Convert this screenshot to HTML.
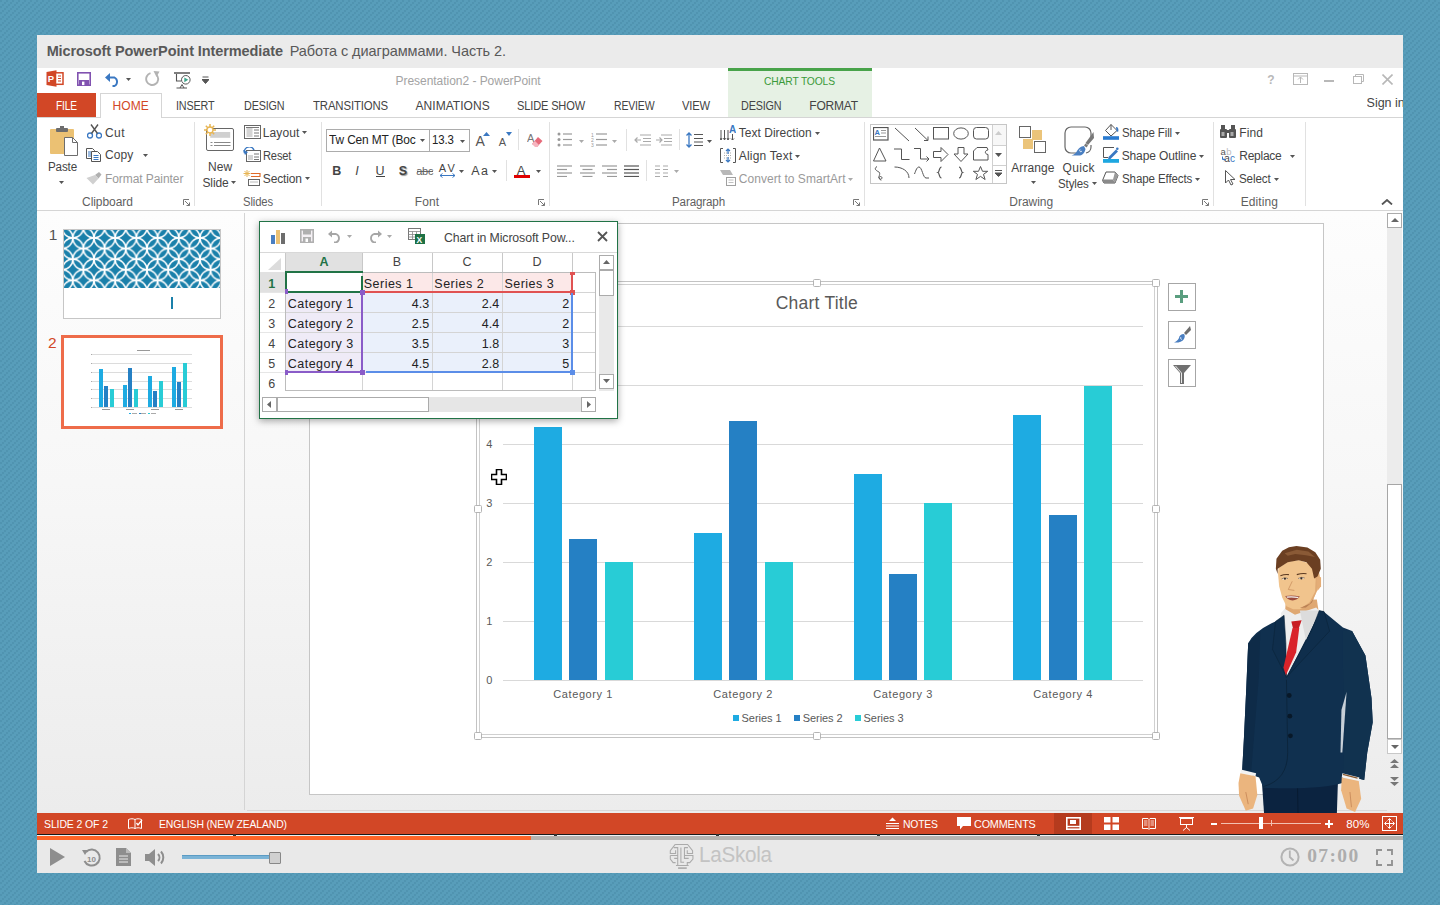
<!DOCTYPE html>
<html><head><meta charset="utf-8">
<style>
*{margin:0;padding:0;box-sizing:border-box}
html,body{width:1440px;height:905px;overflow:hidden}
body{background-color:#589dba;background-image:radial-gradient(circle at 1px 1px,#5094b1 0.7px,rgba(80,148,177,0) 1.6px),radial-gradient(circle at 1px 1px,#5094b1 0.7px,rgba(80,148,177,0) 1.6px),radial-gradient(circle at 1px 1px,#5094b1 0.7px,rgba(80,148,177,0) 1.6px);background-size:6px 6px;background-position:0 0,4px 2px,2px 4px;font-family:"Liberation Sans",sans-serif;position:relative;color:#444}
.a{position:absolute;display:block}
.t{position:absolute;white-space:pre;line-height:1}
</style></head><body>
<div class="a" style="left:37px;top:35px;width:1366px;height:838px;background:#fff;"></div>
<div class="a" style="left:37px;top:35px;width:1366px;height:33px;background:#ebebeb;"></div>
<div class="a" style="left:37px;top:211px;width:1366px;height:602px;background:linear-gradient(#fdfdfd 0%,#f7f7f7 45%,#ececec 100%);"></div>
<div class="a" style="left:37px;top:210px;width:1366px;height:1px;background:#d5d5d5;"></div>
<div class="t" style="left:46.63px;top:43.70px;font-size:14.5px;color:#595959;font-weight:700;letter-spacing:-0.089px;">Microsoft PowerPoint Intermediate</div>
<div class="t" style="left:289.63px;top:43.70px;font-size:14.5px;color:#595959;letter-spacing:-0.075px;">Работа с диаграммами. Часть 2.</div>
<svg class="a" style="left:46px;top:70px;" width="18" height="17" viewBox="0 0 18 17"><path d="M0.5 2 L10.5 0.3 V16.7 L0.5 15Z" fill="#d24726"/><rect x="9.5" y="2.8" width="7.5" height="11.5" fill="#fff" stroke="#d24726" stroke-width="1.5"/><path d="M12 6h3M12 8.5h3M12 11h3" stroke="#d24726" stroke-width="1.2"/><text x="1.8" y="12.3" font-family="Liberation Sans" font-weight="700" font-size="9.5" fill="#fff">P</text></svg>
<svg class="a" style="left:77px;top:72px;" width="14" height="14" viewBox="0 0 14 14"><rect x="0.8" y="0.8" width="12.4" height="12.4" fill="#fff" stroke="#8152b0" stroke-width="1.6"/><rect x="2" y="8" width="10" height="5.5" fill="#8152b0"/><rect x="5" y="9.6" width="2.4" height="3.5" fill="#fff"/></svg>
<svg class="a" style="left:105px;top:71px;" width="17" height="16" viewBox="0 0 17 16"><path d="M3 6.5 H9.5 A4.8 4.8 0 0 1 9.5 15 H7.5" fill="none" stroke="#3a78c2" stroke-width="1.9"/><path d="M0 6.5 L5 2 V11Z" fill="#3a78c2"/></svg>
<svg class="a" style="left:126px;top:78px;" width="5" height="3" viewBox="0 0 5 3"><path d="M0 0H5L2.5 3Z" fill="#555"/></svg>
<svg class="a" style="left:145px;top:71px;" width="15" height="15" viewBox="0 0 15 15"><path d="M11.5 3.8 A6 6 0 1 1 5.5 2.2" fill="none" stroke="#b3b3b3" stroke-width="1.9"/><path d="M8.5 0 L14.5 0.5 L11.5 6Z" fill="#b3b3b3"/></svg>
<svg class="a" style="left:174px;top:72px;" width="17" height="17" viewBox="0 0 17 17"><path d="M0 1H16" stroke="#555" stroke-width="1.5"/><path d="M2.5 2V9H7" fill="none" stroke="#555" stroke-width="1.1"/><circle cx="11.8" cy="7.8" r="4.3" fill="#fff" stroke="#555" stroke-width="1"/><path d="M10.3 5.5 L14.3 7.8 L10.3 10.2Z" fill="#3aa389"/><path d="M2.5 16H13M6 16L8 12.5L10 16" fill="none" stroke="#555" stroke-width="1"/></svg>
<svg class="a" style="left:202px;top:76px;" width="7" height="8" viewBox="0 0 7 8"><path d="M0.5 1H6.5M0 3.5H7L3.5 7.5Z" stroke="#555" stroke-width="1" fill="#555"/></svg>
<div class="t" style="left:395.53px;top:75.04px;font-size:12px;color:#a3a3a3;letter-spacing:-0.036px;">Presentation2 - PowerPoint</div>
<div class="t" style="left:1267.28px;top:74.04px;font-size:12px;color:#b8b8b8;font-weight:700;">?</div>
<svg class="a" style="left:1293px;top:73px;" width="15" height="12" viewBox="0 0 15 12"><rect x="0.5" y="0.5" width="14" height="11" fill="none" stroke="#b8b8b8"/><path d="M1 3H14" stroke="#b8b8b8"/><path d="M7.5 4V10M5 6.5L7.5 4L10 6.5" fill="none" stroke="#b8b8b8"/></svg>
<div class="a" style="left:1324px;top:80px;width:10px;height:1.5px;background:#b8b8b8;"></div>
<svg class="a" style="left:1353px;top:74px;" width="11" height="10" viewBox="0 0 11 10"><rect x="0.5" y="2.5" width="8" height="7" fill="none" stroke="#b8b8b8"/><path d="M2.5 2.5V0.5H10.5V7.5H8.5" fill="none" stroke="#b8b8b8"/></svg>
<svg class="a" style="left:1382px;top:74px;" width="11" height="11" viewBox="0 0 11 11"><path d="M0.5 0.5L10.5 10.5M10.5 0.5L0.5 10.5" stroke="#b8b8b8" stroke-width="1.6"/></svg>
<div class="a" style="left:728px;top:68px;width:144px;height:49px;background:#e6f1e4;"></div>
<div class="a" style="left:728px;top:68px;width:144px;height:3px;background:#48a34a;"></div>
<div class="t" style="left:763.84px;top:75.89px;font-size:11px;color:#3a9a3a;letter-spacing:-0.153px;transform:scaleX(0.9357);transform-origin:0 0;">CHART TOOLS</div>
<div class="a" style="left:37px;top:93px;width:59px;height:24px;background:#d24726;"></div>
<div class="t" style="left:56.08px;top:100.24px;font-size:12px;color:#fff;letter-spacing:-0.161px;transform:scaleX(0.8453);transform-origin:0 0;">FILE</div>
<div class="a" style="left:100px;top:93px;width:62px;height:25px;background:#fff;border:1px solid #d5d5d5;border-bottom:none"></div>
<div class="a" style="left:37px;top:117px;width:63px;height:1px;background:#d5d5d5;"></div>
<div class="a" style="left:162px;top:117px;width:1241px;height:1px;background:#d5d5d5;"></div>
<div class="t" style="left:112.53px;top:100.24px;font-size:12px;color:#d24726;letter-spacing:0.067px;">HOME</div>
<div class="t" style="left:176.03px;top:100.24px;font-size:12px;color:#444;letter-spacing:-0.170px;transform:scaleX(0.8983);transform-origin:0 0;">INSERT</div>
<div class="t" style="left:243.53px;top:100.24px;font-size:12px;color:#444;letter-spacing:-0.179px;transform:scaleX(0.8994);transform-origin:0 0;">DESIGN</div>
<div class="t" style="left:312.53px;top:100.24px;font-size:12px;color:#444;letter-spacing:-0.159px;transform:scaleX(0.9502);transform-origin:0 0;">TRANSITIONS</div>
<div class="t" style="left:415.53px;top:100.24px;font-size:12px;color:#444;letter-spacing:0.047px;">ANIMATIONS</div>
<div class="t" style="left:517.28px;top:100.24px;font-size:12px;color:#444;letter-spacing:-0.165px;transform:scaleX(0.9219);transform-origin:0 0;">SLIDE SHOW</div>
<div class="t" style="left:613.78px;top:100.24px;font-size:12px;color:#444;letter-spacing:-0.185px;transform:scaleX(0.8735);transform-origin:0 0;">REVIEW</div>
<div class="t" style="left:682.28px;top:100.24px;font-size:12px;color:#444;letter-spacing:-0.196px;transform:scaleX(0.9348);transform-origin:0 0;">VIEW</div>
<div class="t" style="left:740.53px;top:100.24px;font-size:12px;color:#444;letter-spacing:-0.179px;transform:scaleX(0.8994);transform-origin:0 0;">DESIGN</div>
<div class="t" style="left:809.28px;top:100.24px;font-size:12px;color:#444;letter-spacing:-0.216px;">FORMAT</div>
<div class="t" style="left:1366.55px;top:96.61px;font-size:12.5px;color:#444;width:36.4px;height:16px;overflow:hidden;">Sign in</div>
<div class="a" style="left:194px;top:122px;width:1px;height:84px;background:#e1e1e1;"></div>
<div class="a" style="left:321px;top:122px;width:1px;height:84px;background:#e1e1e1;"></div>
<div class="a" style="left:549px;top:122px;width:1px;height:84px;background:#e1e1e1;"></div>
<div class="a" style="left:864px;top:122px;width:1px;height:84px;background:#e1e1e1;"></div>
<div class="a" style="left:1213px;top:122px;width:1px;height:84px;background:#e1e1e1;"></div>
<div class="a" style="left:1305px;top:122px;width:1px;height:84px;background:#e1e1e1;"></div>
<div class="t" style="left:82.08px;top:195.94px;font-size:12px;color:#5f5f5f;letter-spacing:-0.072px;">Clipboard</div>
<div class="t" style="left:242.88px;top:195.94px;font-size:12px;color:#5f5f5f;letter-spacing:-0.126px;transform:scaleX(0.9398);transform-origin:0 0;">Slides</div>
<div class="t" style="left:414.78px;top:195.94px;font-size:12px;color:#5f5f5f;letter-spacing:0.128px;">Font</div>
<div class="t" style="left:671.78px;top:195.94px;font-size:12px;color:#5f5f5f;letter-spacing:-0.137px;transform:scaleX(0.9674);transform-origin:0 0;">Paragraph</div>
<div class="t" style="left:1009.28px;top:195.94px;font-size:12px;color:#5f5f5f;letter-spacing:-0.019px;">Drawing</div>
<div class="t" style="left:1240.78px;top:195.94px;font-size:12px;color:#5f5f5f;letter-spacing:0.083px;">Editing</div>
<svg class="a" style="left:183px;top:199px;" width="7" height="7" viewBox="0 0 7 7"><path d="M0.5 6V0.5H6" fill="none" stroke="#777"/><path d="M2 2L6.5 6.5M3.5 6.5H6.5V3.5" fill="none" stroke="#777"/></svg>
<svg class="a" style="left:538px;top:199px;" width="7" height="7" viewBox="0 0 7 7"><path d="M0.5 6V0.5H6" fill="none" stroke="#777"/><path d="M2 2L6.5 6.5M3.5 6.5H6.5V3.5" fill="none" stroke="#777"/></svg>
<svg class="a" style="left:853px;top:199px;" width="7" height="7" viewBox="0 0 7 7"><path d="M0.5 6V0.5H6" fill="none" stroke="#777"/><path d="M2 2L6.5 6.5M3.5 6.5H6.5V3.5" fill="none" stroke="#777"/></svg>
<svg class="a" style="left:1202px;top:199px;" width="7" height="7" viewBox="0 0 7 7"><path d="M0.5 6V0.5H6" fill="none" stroke="#777"/><path d="M2 2L6.5 6.5M3.5 6.5H6.5V3.5" fill="none" stroke="#777"/></svg>
<svg class="a" style="left:1381px;top:199px;" width="12" height="6" viewBox="0 0 12 6"><path d="M1 5.5L6 1L11 5.5" fill="none" stroke="#555" stroke-width="1.8"/></svg>
<svg class="a" style="left:50px;top:126px;" width="28" height="30" viewBox="0 0 28 30"><rect x="0" y="3" width="24" height="25" rx="1" fill="#ebc173"/><rect x="6" y="2" width="12" height="4" rx="1" fill="#6d6d6d"/><rect x="10" y="0" width="4" height="3" fill="#6d6d6d"/><path d="M14.5 11.5H22.5L27.5 16.5V29.5H14.5Z" fill="#fff" stroke="#6d6d6d"/><path d="M22.5 11.5V16.5H27.5" fill="none" stroke="#6d6d6d"/></svg>
<div class="t" style="left:47.88px;top:160.84px;font-size:12px;color:#444;letter-spacing:-0.147px;transform:scaleX(0.9689);transform-origin:0 0;">Paste</div>
<svg class="a" style="left:59px;top:181px;" width="5" height="3" viewBox="0 0 5 3"><path d="M0 0H5L2.5 3Z" fill="#555"/></svg>
<svg class="a" style="left:87px;top:124px;" width="15" height="15" viewBox="0 0 15 15"><circle cx="3" cy="11.5" r="2.5" fill="none" stroke="#3a78c2" stroke-width="1.3"/><circle cx="12" cy="11.5" r="2.5" fill="none" stroke="#3a78c2" stroke-width="1.3"/><path d="M4.5 9.5L11 0.5M10.5 9.5L4 0.5" stroke="#555" stroke-width="1.4"/></svg>
<div class="t" style="left:104.88px;top:126.79px;font-size:12px;color:#444;letter-spacing:0.456px;">Cut</div>
<svg class="a" style="left:86px;top:148px;" width="15" height="14" viewBox="0 0 15 14"><path d="M0.5 0.5H6.5L8.5 2.5V10.5H0.5Z" fill="#fff" stroke="#555"/><path d="M5.5 3.5H11.5L14.5 6.5V13.5H5.5Z" fill="#fff" stroke="#555"/><path d="M2 4H5M2 6H5M2 8H5" stroke="#3a78c2"/><path d="M7.5 7.5H12.5M7.5 9.5H12.5M7.5 11.5H12.5" stroke="#3a78c2"/></svg>
<div class="t" style="left:104.88px;top:149.44px;font-size:12px;color:#444;letter-spacing:0.128px;">Copy</div>
<svg class="a" style="left:143px;top:154px;" width="5" height="3" viewBox="0 0 5 3"><path d="M0 0H5L2.5 3Z" fill="#555"/></svg>
<svg class="a" style="left:86px;top:171px;" width="16" height="14" viewBox="0 0 16 14"><path d="M9 4L13 1L15.5 3.5L12.5 7.5Z" fill="#b0b0b0"/><path d="M9 4L12.5 7.5L7 13.5L0.5 7Z" fill="#d0d0d0"/></svg>
<div class="t" style="left:104.88px;top:172.64px;font-size:12px;color:#9a9a9a;letter-spacing:-0.058px;">Format Painter</div>
<svg class="a" style="left:203px;top:124px;" width="32" height="28" viewBox="0 0 32 28"><rect x="3.5" y="4.5" width="27" height="22" rx="1.5" fill="#fff" stroke="#666"/><rect x="7.2" y="8" width="20" height="5.8" fill="#d0d0d0"/><path d="M7.5 18.5H27.5M7.5 21.5H27.5" stroke="#888" stroke-dasharray="2 1.5 17 0"/><g stroke="#e8b552" stroke-width="1.5"><path d="M7 0V12M1 6H13M2.8 1.8L11.2 10.2M11.2 1.8L2.8 10.2"/></g><circle cx="7" cy="6" r="3" fill="#fff" stroke="#e8b552" stroke-width="1.3"/></svg>
<div class="t" style="left:208.03px;top:160.84px;font-size:12px;color:#444;letter-spacing:0.092px;">New</div>
<div class="t" style="left:202.48px;top:176.54px;font-size:12px;color:#444;letter-spacing:-0.122px;">Slide</div>
<svg class="a" style="left:231px;top:181px;" width="5" height="3" viewBox="0 0 5 3"><path d="M0 0H5L2.5 3Z" fill="#555"/></svg>
<svg class="a" style="left:244px;top:125px;" width="17" height="14" viewBox="0 0 17 14"><rect x="0.5" y="0.5" width="16" height="13" fill="#fff" stroke="#666"/><rect x="2.5" y="3" width="6" height="9" fill="#d4d4d4"/><path d="M2 2.5H15M10 5H15M10 8H15M10 11H15" stroke="#777"/></svg>
<div class="t" style="left:262.78px;top:126.54px;font-size:12px;color:#444;letter-spacing:0.114px;">Layout</div>
<svg class="a" style="left:302px;top:131px;" width="5" height="3" viewBox="0 0 5 3"><path d="M0 0H5L2.5 3Z" fill="#555"/></svg>
<svg class="a" style="left:243px;top:147px;" width="18" height="15" viewBox="0 0 18 15"><rect x="3.5" y="3.5" width="14" height="11" fill="#fff" stroke="#666"/><rect x="5" y="8" width="5" height="5" fill="#d4d4d4"/><path d="M11 7H16M11 10H16M11 12.5H16" stroke="#777"/><path d="M1.5 6A5 5 0 0 1 11 3" fill="none" stroke="#3a78c2" stroke-width="1.5"/><path d="M0 3L2 8L5 5Z" fill="#3a78c2"/></svg>
<div class="t" style="left:262.78px;top:149.74px;font-size:12px;color:#444;letter-spacing:-0.151px;transform:scaleX(0.9237);transform-origin:0 0;">Reset</div>
<svg class="a" style="left:243px;top:170px;" width="18" height="16" viewBox="0 0 18 16"><g stroke="#e8b552" stroke-width="1"><path d="M4 0V7M0.5 3.5H7.5M1.5 1L6.5 6M6.5 1L1.5 6"/></g><path d="M8 3.5H17V6.5H8" fill="none" stroke="#e06b2b" stroke-width="1.2"/><rect x="5.5" y="9.5" width="11" height="6" fill="#fff" stroke="#666"/><path d="M7 12H15" stroke="#bbb"/></svg>
<div class="t" style="left:262.78px;top:172.64px;font-size:12px;color:#444;letter-spacing:-0.139px;">Section</div>
<svg class="a" style="left:305px;top:177px;" width="5" height="3" viewBox="0 0 5 3"><path d="M0 0H5L2.5 3Z" fill="#555"/></svg>
<div class="a" style="left:326px;top:129px;width:104px;height:23px;background:#fff;border:1px solid #acacac;"></div>
<div class="t" style="left:328.65px;top:134.31px;font-size:12.5px;color:#222;letter-spacing:-0.141px;transform:scaleX(0.9535);transform-origin:0 0;">Tw Cen MT (Boc</div>
<svg class="a" style="left:420px;top:139px;" width="5" height="3" viewBox="0 0 5 3"><path d="M0 0H5L2.5 3Z" fill="#555"/></svg>
<div class="a" style="left:429px;top:129px;width:41px;height:23px;background:#fff;border:1px solid #acacac;"></div>
<div class="t" style="left:431.75px;top:134.31px;font-size:12.5px;color:#222;letter-spacing:-0.154px;transform:scaleX(0.9146);transform-origin:0 0;">13.3</div>
<svg class="a" style="left:460px;top:140px;" width="5" height="3" viewBox="0 0 5 3"><path d="M0 0H5L2.5 3Z" fill="#555"/></svg>
<div class="t" style="left:475.41px;top:134.08px;font-size:14px;color:#555;">A</div>
<svg class="a" style="left:483px;top:132px;" width="7" height="4" viewBox="0 0 7 4"><path d="M0 4H7L3.5 0Z" fill="#3a78c2"/></svg>
<div class="t" style="left:498.84px;top:136.65px;font-size:11px;color:#555;">A</div>
<svg class="a" style="left:506px;top:132px;" width="6" height="4" viewBox="0 0 6 4"><path d="M0 0H6L3 4Z" fill="#3a78c2"/></svg>
<div class="a" style="left:518px;top:129px;width:1px;height:21px;background:#e1e1e1;"></div>
<svg class="a" style="left:527px;top:132px;" width="16" height="16" viewBox="0 0 16 16"><text x="0" y="10" font-family="Liberation Sans" font-size="11" fill="#777">A</text><path d="M5 12L11 5L15.5 9L10 15Z" fill="#e66a7a"/><path d="M5 12L8 9L12 13L10 15H8Z" fill="#f6b5bf"/></svg>
<div class="t" style="left:332.15px;top:164.61px;font-size:12.5px;color:#444;font-weight:700;">B</div>
<div class="t" style="left:355.25px;top:164.61px;font-size:12.5px;color:#444;font-style:italic;">I</div>
<div class="t" style="left:375.50px;top:164.61px;font-size:12.5px;color:#444;">U</div>
<div class="a" style="left:376px;top:176px;width:9px;height:1px;background:#444;"></div>
<div class="t" style="left:398.85px;top:164.61px;font-size:12.5px;color:#444;font-weight:700;text-shadow:1px 1px 1px #999;">S</div>
<div class="t" style="left:416.34px;top:165.90px;font-size:11px;color:#666;letter-spacing:-0.325px;">abc</div>
<div class="a" style="left:417px;top:171px;width:16px;height:1px;background:#666;"></div>
<div class="t" style="left:438.84px;top:163.40px;font-size:11px;color:#444;letter-spacing:2.241px;">AV</div>
<svg class="a" style="left:439px;top:173px;" width="17" height="5" viewBox="0 0 17 5"><path d="M1 2.5H16M1 2.5L3.5 0.5M1 2.5L3.5 4.5M16 2.5L13.5 0.5M16 2.5L13.5 4.5" fill="none" stroke="#3a78c2" stroke-width="1"/></svg>
<svg class="a" style="left:459px;top:170px;" width="5" height="3" viewBox="0 0 5 3"><path d="M0 0H5L2.5 3Z" fill="#555"/></svg>
<div class="t" style="left:471.25px;top:164.61px;font-size:12.5px;color:#444;letter-spacing:1.453px;">Aa</div>
<svg class="a" style="left:492px;top:170px;" width="5" height="3" viewBox="0 0 5 3"><path d="M0 0H5L2.5 3Z" fill="#555"/></svg>
<div class="a" style="left:506px;top:160px;width:1px;height:21px;background:#e1e1e1;"></div>
<div class="t" style="left:516.72px;top:164.19px;font-size:13px;color:#444;">A</div>
<div class="a" style="left:514px;top:175px;width:16px;height:3px;background:#e00000;"></div>
<svg class="a" style="left:536px;top:170px;" width="5" height="3" viewBox="0 0 5 3"><path d="M0 0H5L2.5 3Z" fill="#555"/></svg>
<svg class="a" style="left:557px;top:132px;" width="15" height="15" viewBox="0 0 15 15"><circle cx="2" cy="2.0" r="1.5" fill="#9a9a9a"/><path d="M6 2.0H15" stroke="#9a9a9a" stroke-width="1.2"/><circle cx="2" cy="7.5" r="1.5" fill="#9a9a9a"/><path d="M6 7.5H15" stroke="#9a9a9a" stroke-width="1.2"/><circle cx="2" cy="13.0" r="1.5" fill="#9a9a9a"/><path d="M6 13.0H15" stroke="#9a9a9a" stroke-width="1.2"/></svg>
<svg class="a" style="left:579px;top:140px;" width="5" height="3" viewBox="0 0 5 3"><path d="M0 0H5L2.5 3Z" fill="#aaa"/></svg>
<svg class="a" style="left:591px;top:132px;" width="16" height="15" viewBox="0 0 16 15"><text x="0" y="5" font-size="5" fill="#999" font-family="Liberation Sans">1</text><text x="0" y="10" font-size="5" fill="#999" font-family="Liberation Sans">2</text><text x="0" y="15" font-size="5" fill="#999" font-family="Liberation Sans">3</text><path d="M5 2.0H16" stroke="#9a9a9a" stroke-width="1.2"/><path d="M5 7.5H16" stroke="#9a9a9a" stroke-width="1.2"/><path d="M5 13.0H16" stroke="#9a9a9a" stroke-width="1.2"/></svg>
<svg class="a" style="left:612px;top:140px;" width="5" height="3" viewBox="0 0 5 3"><path d="M0 0H5L2.5 3Z" fill="#aaa"/></svg>
<div class="a" style="left:626px;top:129px;width:1px;height:22px;background:#e1e1e1;"></div>
<svg class="a" style="left:634px;top:134px;" width="17" height="12" viewBox="0 0 17 12"><path d="M6 1H17M9 4.5H17M9 7.5H17M6 11H17" stroke="#aaa" stroke-width="1.2"/><path d="M7 6H1M3.5 3.5L1 6L3.5 8.5" fill="none" stroke="#aaa" stroke-width="1.2"/></svg>
<svg class="a" style="left:655px;top:134px;" width="17" height="12" viewBox="0 0 17 12"><path d="M6 1H17M9 4.5H17M9 7.5H17M6 11H17" stroke="#aaa" stroke-width="1.2"/><path d="M1 6H7M4.5 3.5L7 6L4.5 8.5" fill="none" stroke="#aaa" stroke-width="1.2"/></svg>
<svg class="a" style="left:557px;top:165px;" width="15" height="12" viewBox="0 0 15 12"><path d="M0 1.0H15" stroke="#9a9a9a" stroke-width="1.2"/><path d="M0 4.5H10" stroke="#9a9a9a" stroke-width="1.2"/><path d="M0 8.0H15" stroke="#9a9a9a" stroke-width="1.2"/><path d="M0 11.5H10" stroke="#9a9a9a" stroke-width="1.2"/></svg>
<svg class="a" style="left:580px;top:165px;" width="15" height="12" viewBox="0 0 15 12"><path d="M0.0 1.0H15.0" stroke="#9a9a9a" stroke-width="1.2"/><path d="M2.5 4.5H12.5" stroke="#9a9a9a" stroke-width="1.2"/><path d="M0.0 8.0H15.0" stroke="#9a9a9a" stroke-width="1.2"/><path d="M2.5 11.5H12.5" stroke="#9a9a9a" stroke-width="1.2"/></svg>
<svg class="a" style="left:602px;top:165px;" width="15" height="12" viewBox="0 0 15 12"><path d="M0 1.0H15" stroke="#9a9a9a" stroke-width="1.2"/><path d="M5 4.5H15" stroke="#9a9a9a" stroke-width="1.2"/><path d="M0 8.0H15" stroke="#9a9a9a" stroke-width="1.2"/><path d="M5 11.5H15" stroke="#9a9a9a" stroke-width="1.2"/></svg>
<svg class="a" style="left:624px;top:165px;" width="15" height="12" viewBox="0 0 15 12"><path d="M0 1.0H15" stroke="#555" stroke-width="1.2"/><path d="M0 4.5H15" stroke="#555" stroke-width="1.2"/><path d="M0 8.0H15" stroke="#555" stroke-width="1.2"/><path d="M0 11.5H15" stroke="#555" stroke-width="1.2"/></svg>
<div class="a" style="left:646px;top:160px;width:1px;height:21px;background:#e1e1e1;"></div>
<svg class="a" style="left:655px;top:165px;" width="13" height="12" viewBox="0 0 13 12"><path d="M0 1H5M0 4.5H5M0 8H5M0 11.5H5M8 1H13M8 4.5H13M8 8H13M8 11.5H13" stroke="#aaa" stroke-width="1.2"/></svg>
<svg class="a" style="left:674px;top:170px;" width="5" height="3" viewBox="0 0 5 3"><path d="M0 0H5L2.5 3Z" fill="#aaa"/></svg>
<div class="a" style="left:679px;top:129px;width:1px;height:21px;background:#e1e1e1;"></div>
<svg class="a" style="left:686px;top:132px;" width="17" height="16" viewBox="0 0 17 16"><path d="M3 1V15M0.5 3.5L3 1L5.5 3.5M0.5 12.5L3 15L5.5 12.5" fill="none" stroke="#3a78c2" stroke-width="1.3"/><path d="M8 2.5H17M8 6.5H17M8 10H17M8 13.5H17" stroke="#555" stroke-width="1.2"/></svg>
<svg class="a" style="left:707px;top:140px;" width="5" height="3" viewBox="0 0 5 3"><path d="M0 0H5L2.5 3Z" fill="#555"/></svg>
<svg class="a" style="left:720px;top:124px;" width="16" height="16" viewBox="0 0 16 16"><path d="M1 6V16M4.5 6V16M8 6V16" stroke="#555" stroke-width="1"/><path d="M0 14L1 16L2 14M3.5 14L4.5 16L5.5 14M7 14L8 16L9 14" fill="none" stroke="#555"/><text x="9" y="9" font-family="Liberation Sans" font-weight="700" font-size="10" fill="#3a78c2">A</text><path d="M12.5 10V16M11 14.5L12.5 16L14 14.5" fill="none" stroke="#555"/></svg>
<div class="t" style="left:738.78px;top:127.04px;font-size:12px;color:#444;letter-spacing:0.019px;">Text Direction</div>
<svg class="a" style="left:815px;top:132px;" width="5" height="3" viewBox="0 0 5 3"><path d="M0 0H5L2.5 3Z" fill="#555"/></svg>
<svg class="a" style="left:720px;top:148px;" width="16" height="15" viewBox="0 0 16 15"><path d="M3 0.5H0.5V14.5H3M13 0.5H15.5V14.5H13" fill="none" stroke="#555"/><path d="M4 5H12M4 7.5H12M4 10H12" stroke="#aaa" stroke-dasharray="1 1"/><path d="M8 1V6M6 3L8 1L10 3M8 9V14M6 12L8 14L10 12" fill="none" stroke="#3a78c2" stroke-width="1.2"/></svg>
<div class="t" style="left:738.78px;top:150.04px;font-size:12px;color:#444;letter-spacing:0.182px;">Align Text</div>
<svg class="a" style="left:795px;top:155px;" width="5" height="3" viewBox="0 0 5 3"><path d="M0 0H5L2.5 3Z" fill="#555"/></svg>
<svg class="a" style="left:720px;top:170px;" width="16" height="16" viewBox="0 0 16 16"><path d="M0 0H10L13 5H3Z" fill="#b8b8b8"/><rect x="6.5" y="7.5" width="9" height="8" fill="#fff" stroke="#a0a0a0"/><path d="M8.5 10H13.5M8.5 12.5H13.5" stroke="#c0c0c0"/></svg>
<div class="t" style="left:738.78px;top:173.04px;font-size:12px;color:#9a9a9a;letter-spacing:0.037px;">Convert to SmartArt</div>
<svg class="a" style="left:848px;top:178px;" width="5" height="3" viewBox="0 0 5 3"><path d="M0 0H5L2.5 3Z" fill="#aaa"/></svg>
<div class="a" style="left:870px;top:124px;width:137px;height:60px;background:#fff;border:1px solid #c6c6c6;"></div>
<div class="a" style="left:993px;top:125px;width:13px;height:20px;background:#f7f7f7;"></div>
<div class="a" style="left:992px;top:125px;width:1px;height:58px;background:#d0d0d0;"></div>
<div class="a" style="left:993px;top:145px;width:13px;height:1px;background:#d0d0d0;"></div>
<div class="a" style="left:993px;top:165px;width:13px;height:1px;background:#d0d0d0;"></div>
<svg class="a" style="left:995px;top:131px;" width="7" height="4" viewBox="0 0 7 4"><path d="M0 4H7L3.5 0Z" fill="#ccc"/></svg>
<svg class="a" style="left:995px;top:153px;" width="7" height="4" viewBox="0 0 7 4"><path d="M0 0H7L3.5 4Z" fill="#555"/></svg>
<svg class="a" style="left:995px;top:170px;" width="7" height="7" viewBox="0 0 7 7"><path d="M0 0.5H7M0 3H7L3.5 6.5Z" stroke="#555" fill="#555" stroke-width="1"/></svg>
<svg class="a" style="left:873px;top:127px;" width="16" height="15" viewBox="0 0 16 15"><rect x="0.5" y="0.5" width="14.5" height="12.5" fill="none" stroke="#555" stroke-width="1.2"/><text x="1.5" y="7.6" font-size="7.5" font-weight="700" font-family="Liberation Sans" fill="#3a78c2">A</text><path d="M8 3.5H13M8 6H13M2 9.5H13" stroke="#999" stroke-width="1"/></svg>
<svg class="a" style="left:893.5px;top:127px;" width="16" height="15" viewBox="0 0 16 15"><path d="M1 1L15 14" fill="none" stroke="#555" stroke-width="1"/></svg>
<svg class="a" style="left:913.5px;top:127px;" width="16" height="15" viewBox="0 0 16 15"><path d="M1 1L14 13.5M14 9.5V13.5H10" fill="none" stroke="#555" stroke-width="1"/></svg>
<svg class="a" style="left:933px;top:127px;" width="16" height="15" viewBox="0 0 16 15"><rect x="0.5" y="0.5" width="15" height="11.5" fill="none" stroke="#555" stroke-width="1"/></svg>
<svg class="a" style="left:953px;top:127px;" width="16" height="15" viewBox="0 0 16 15"><ellipse cx="8" cy="6.5" rx="7.3" ry="5.6" fill="none" stroke="#555" stroke-width="1"/></svg>
<svg class="a" style="left:973px;top:127px;" width="16" height="15" viewBox="0 0 16 15"><rect x="0.5" y="0.5" width="15" height="11.5" rx="3" fill="none" stroke="#555" stroke-width="1"/></svg>
<svg class="a" style="left:873px;top:146.5px;" width="16" height="15" viewBox="0 0 16 15"><path d="M6.5 1L13 14H0.5Z" fill="none" stroke="#555" stroke-width="1"/></svg>
<svg class="a" style="left:893.5px;top:146.5px;" width="16" height="15" viewBox="0 0 16 15"><path d="M0 2H7.5V12.5H15.5" fill="none" stroke="#555" stroke-width="1"/></svg>
<svg class="a" style="left:913.5px;top:146.5px;" width="16" height="15" viewBox="0 0 16 15"><path d="M0 1.5H6.5V12H15M12.5 9.5L15 12L12.5 14.5" fill="none" stroke="#555" stroke-width="1"/></svg>
<svg class="a" style="left:933px;top:146.5px;" width="16" height="15" viewBox="0 0 16 15"><path d="M0.5 4.5H8V0.5L15 7.5L8 14.5V10.5H0.5Z" fill="none" stroke="#555" stroke-width="1"/></svg>
<svg class="a" style="left:953px;top:146.5px;" width="16" height="15" viewBox="0 0 16 15"><path d="M5 0.5H11V7H15L8 14.5L1 7H5Z" fill="none" stroke="#555" stroke-width="1"/></svg>
<svg class="a" style="left:973px;top:146.5px;" width="16" height="15" viewBox="0 0 16 15"><path d="M4 0.5H14L15 3C12 3 11 7 15 7.5V13H0.5V4Z" fill="none" stroke="#555" stroke-width="1"/></svg>
<svg class="a" style="left:873px;top:166px;" width="16" height="15" viewBox="0 0 16 15"><path d="M4 0.5C0 3 4 5 6 6C8 8 5 11 6 12C7 14 9 13 9 12C9 10 6 10 6 12L8 14.5" fill="none" stroke="#555" stroke-width="1"/></svg>
<svg class="a" style="left:893.5px;top:166px;" width="16" height="15" viewBox="0 0 16 15"><path d="M0.5 1C8 1 15 5 15 12" fill="none" stroke="#555" stroke-width="1"/></svg>
<svg class="a" style="left:913.5px;top:166px;" width="16" height="15" viewBox="0 0 16 15"><path d="M0.5 8C2 4 3 1 5 1C8 1 9 12 12 12H15" fill="none" stroke="#555" stroke-width="1"/></svg>
<svg class="a" style="left:933px;top:166px;" width="16" height="15" viewBox="0 0 16 15"><path d="M8.5 1C6 1 6.5 6 5 6.5C6.5 7 6 12 8.5 12" fill="none" stroke="#555" stroke-width="1.2"/></svg>
<svg class="a" style="left:953px;top:166px;" width="16" height="15" viewBox="0 0 16 15"><path d="M6 1C8.5 1 8 6 9.5 6.5C8 7 8.5 12 6 12" fill="none" stroke="#555" stroke-width="1.2"/></svg>
<svg class="a" style="left:973px;top:166px;" width="16" height="15" viewBox="0 0 16 15"><path d="M7.5 0.5L9.5 5.3H14.7L10.5 8.4L12.1 13.5L7.5 10.4L2.9 13.5L4.5 8.4L0.3 5.3H5.5Z" fill="none" stroke="#555" stroke-width="1"/></svg>
<svg class="a" style="left:1019px;top:126px;" width="28" height="28" viewBox="0 0 28 28"><rect x="13" y="4" width="10" height="10" fill="#ebc47a"/><rect x="4" y="13" width="10" height="10" fill="#ebc47a"/><rect x="0.5" y="0.5" width="11" height="11" fill="none" stroke="#666"/><rect x="15.5" y="15.5" width="11" height="11" fill="#fff" stroke="#666"/></svg>
<div class="t" style="left:1011.28px;top:161.64px;font-size:12px;color:#444;letter-spacing:0.083px;">Arrange</div>
<svg class="a" style="left:1031px;top:181px;" width="5" height="3" viewBox="0 0 5 3"><path d="M0 0H5L2.5 3Z" fill="#555"/></svg>
<svg class="a" style="left:1064px;top:126px;" width="32" height="30" viewBox="0 0 32 30"><path d="M14 27H7A6 6 0 0 1 1 21V7A6 6 0 0 1 7 1H21A6 6 0 0 1 27 7V13M27 19V21A6 6 0 0 1 22 27" fill="none" stroke="#666" stroke-width="1.2"/><path d="M29.5 6L30 12L24 19L21.5 17Z" fill="#787878"/><path d="M21.5 17.5L24 19.5L22.5 21.5L20 19.5Z" fill="#787878"/><path d="M20 20C17 20 14 23 13 25C12 27 10 28.5 7.5 29.5H16C19 29 21 26 21.5 23Z" fill="#4a7fc1"/><path d="M16 23.5C15 25 16.5 26.5 18 25" fill="none" stroke="#fff" stroke-width="0.9"/></svg>
<div class="t" style="left:1062.48px;top:161.64px;font-size:12px;color:#444;letter-spacing:0.328px;">Quick</div>
<div class="t" style="left:1058.48px;top:177.64px;font-size:12px;color:#444;letter-spacing:-0.126px;transform:scaleX(0.9592);transform-origin:0 0;">Styles</div>
<svg class="a" style="left:1092px;top:182px;" width="5" height="3" viewBox="0 0 5 3"><path d="M0 0H5L2.5 3Z" fill="#555"/></svg>
<svg class="a" style="left:1103px;top:123px;" width="17" height="17" viewBox="0 0 17 17"><path d="M8 1.5L14 7.5L8 13L2.5 7.5Z" fill="#fff" stroke="#555" stroke-width="1"/><path d="M8 1.5V7" stroke="#555"/><path d="M13 4C15 4 16 6 15 9L13.5 8Z" fill="#3a78c2"/><rect x="0" y="13.2" width="16" height="3.6" fill="#2a7bd0"/></svg>
<div class="t" style="left:1121.68px;top:127.44px;font-size:12px;color:#444;letter-spacing:-0.116px;transform:scaleX(0.9583);transform-origin:0 0;">Shape Fill</div>
<svg class="a" style="left:1175px;top:132px;" width="5" height="3" viewBox="0 0 5 3"><path d="M0 0H5L2.5 3Z" fill="#555"/></svg>
<svg class="a" style="left:1103px;top:146px;" width="17" height="17" viewBox="0 0 17 17"><path d="M11 1.5H0.5V11.5H5" fill="none" stroke="#555"/><path d="M5.5 11L13 3.5L15 5.5L7.5 13L5 13.5Z" fill="#3a78c2"/><circle cx="14.3" cy="2.7" r="1.3" fill="#3a78c2"/><rect x="0" y="13" width="16" height="3.8" fill="#1ea7e0"/></svg>
<div class="t" style="left:1121.68px;top:150.24px;font-size:12px;color:#444;letter-spacing:-0.114px;">Shape Outline</div>
<svg class="a" style="left:1199px;top:155px;" width="5" height="3" viewBox="0 0 5 3"><path d="M0 0H5L2.5 3Z" fill="#555"/></svg>
<svg class="a" style="left:1102px;top:171px;" width="17" height="14" viewBox="0 0 17 14"><path d="M4 1H13L16 4.5L13 12H2L0.5 9.5Z" fill="#fff" stroke="#555" stroke-width="1"/><path d="M13 1L16 4.5L13 12L11 8.5Z" fill="#9a9a9a"/><path d="M0.5 9.5L2 12H13L11 8.5H1Z" fill="#8a8a8a"/></svg>
<div class="t" style="left:1121.68px;top:173.04px;font-size:12px;color:#444;letter-spacing:-0.122px;transform:scaleX(0.9633);transform-origin:0 0;">Shape Effects</div>
<svg class="a" style="left:1195px;top:178px;" width="5" height="3" viewBox="0 0 5 3"><path d="M0 0H5L2.5 3Z" fill="#555"/></svg>
<svg class="a" style="left:1220px;top:125px;" width="16" height="13" viewBox="0 0 16 13"><rect x="0" y="4" width="7" height="9" rx="1" fill="#555"/><rect x="9" y="4" width="7" height="9" rx="1" fill="#555"/><rect x="1" y="0" width="4" height="5" fill="#555"/><rect x="11" y="0" width="4" height="5" fill="#555"/><rect x="6" y="5" width="4" height="3" fill="#555"/><rect x="1.5" y="7" width="3" height="4" fill="#fff" opacity=".5"/><rect x="10.5" y="7" width="3" height="4" fill="#fff" opacity=".5"/></svg>
<div class="t" style="left:1239.28px;top:127.44px;font-size:12px;color:#444;letter-spacing:0.119px;">Find</div>
<svg class="a" style="left:1220px;top:147px;" width="18" height="16" viewBox="0 0 18 16"><text x="0.5" y="7.5" font-family="Liberation Sans" font-size="9.5" fill="#555">a</text><text x="6.3" y="7.5" font-family="Liberation Sans" font-size="9.5" fill="#bbb">b</text><text x="4.3" y="14.6" font-family="Liberation Sans" font-size="10" fill="#444">a</text><text x="10" y="14.6" font-family="Liberation Sans" font-size="10" fill="#3a78c2">c</text><path d="M2.5 9.5V12.5H5M3.8 11.3L5 12.5L3.8 13.7" fill="none" stroke="#3a78c2" stroke-width="1"/></svg>
<div class="t" style="left:1239.28px;top:150.24px;font-size:12px;color:#444;letter-spacing:-0.255px;">Replace</div>
<svg class="a" style="left:1290px;top:155px;" width="5" height="3" viewBox="0 0 5 3"><path d="M0 0H5L2.5 3Z" fill="#555"/></svg>
<svg class="a" style="left:1225px;top:170px;" width="11" height="16" viewBox="0 0 11 16"><path d="M0.5 0.5V13L3.5 10L6 15L8 14L5.5 9.5H10Z" fill="#fff" stroke="#555"/></svg>
<div class="t" style="left:1239.28px;top:173.04px;font-size:12px;color:#444;letter-spacing:-0.129px;transform:scaleX(0.9678);transform-origin:0 0;">Select</div>
<svg class="a" style="left:1274px;top:178px;" width="5" height="3" viewBox="0 0 5 3"><path d="M0 0H5L2.5 3Z" fill="#555"/></svg>
<div class="a" style="left:244px;top:213px;width:1px;height:597px;background:#d4d4d4;"></div>
<div class="a" style="left:247px;top:810px;width:1140px;height:1px;background:#d8d8d8;"></div>
<div class="t" style="left:48.87px;top:227.25px;font-size:15.5px;color:#555;">1</div>
<div class="t" style="left:48.07px;top:335.25px;font-size:15.5px;color:#d24726;">2</div>
<div class="a" style="left:63px;top:229px;width:158px;height:90px;background:#fff;border:1px solid #c6c6c6;"></div>
<svg class="a" style="left:64px;top:230px" width="156" height="58"><defs><pattern id="sh" x="8.799999999999997" y="8" width="21.2" height="21.2" patternUnits="userSpaceOnUse"><rect width="21.2" height="21.2" fill="#1a80aa"/><g fill="none" stroke="#fff" stroke-width="1.5"><circle cx="10.6" cy="0" r="10.6"/><circle cx="0" cy="10.6" r="10.6"/><circle cx="21.2" cy="10.6" r="10.6"/><circle cx="10.6" cy="21.2" r="10.6"/></g></pattern></defs><rect width="156" height="58" fill="url(#sh)"/></svg>
<div class="a" style="left:171px;top:297px;width:1.5px;height:12px;background:#1a80aa;"></div>
<div class="a" style="left:61px;top:335px;width:162px;height:94px;background:#fff;border:3px solid #ee6c4a;"></div>
<div class="a" style="left:92px;top:407px;width:100px;height:1px;background:#dcdcdc;"></div>
<div class="a" style="left:92px;top:398px;width:100px;height:1px;background:#dcdcdc;"></div>
<div class="a" style="left:92px;top:389px;width:100px;height:1px;background:#dcdcdc;"></div>
<div class="a" style="left:92px;top:381px;width:100px;height:1px;background:#dcdcdc;"></div>
<div class="a" style="left:92px;top:372px;width:100px;height:1px;background:#dcdcdc;"></div>
<div class="a" style="left:92px;top:363px;width:100px;height:1px;background:#dcdcdc;"></div>
<div class="a" style="left:92px;top:354px;width:100px;height:1px;background:#dcdcdc;"></div>
<div class="a" style="left:99px;top:369.0px;width:4px;height:38.0px;background:#1eabe2;"></div>
<div class="a" style="left:104px;top:385.8px;width:4px;height:21.2px;background:#2580c4;"></div>
<div class="a" style="left:109.5px;top:389.3px;width:4px;height:17.7px;background:#28ccd6;"></div>
<div class="a" style="left:102.0px;top:409px;width:8px;height:1px;background:#999;"></div>
<div class="a" style="left:123px;top:384.9px;width:4px;height:22.1px;background:#1eabe2;"></div>
<div class="a" style="left:128px;top:368.1px;width:4px;height:38.9px;background:#2580c4;"></div>
<div class="a" style="left:133.5px;top:389.3px;width:4px;height:17.7px;background:#28ccd6;"></div>
<div class="a" style="left:126.3px;top:409px;width:8px;height:1px;background:#999;"></div>
<div class="a" style="left:148px;top:376.1px;width:4px;height:30.9px;background:#1eabe2;"></div>
<div class="a" style="left:153px;top:391.1px;width:4px;height:15.9px;background:#2580c4;"></div>
<div class="a" style="left:158.5px;top:380.5px;width:4px;height:26.5px;background:#28ccd6;"></div>
<div class="a" style="left:150.6px;top:409px;width:8px;height:1px;background:#999;"></div>
<div class="a" style="left:172px;top:367.3px;width:4px;height:39.7px;background:#1eabe2;"></div>
<div class="a" style="left:177px;top:382.3px;width:4px;height:24.7px;background:#2580c4;"></div>
<div class="a" style="left:182.5px;top:362.9px;width:4px;height:44.1px;background:#28ccd6;"></div>
<div class="a" style="left:174.9px;top:409px;width:8px;height:1px;background:#999;"></div>
<div class="a" style="left:137px;top:349.5px;width:13px;height:1.2px;background:#999;"></div>
<div class="a" style="left:129.0px;top:413px;width:2px;height:1px;background:#1eabe2;"></div>
<div class="a" style="left:131.5px;top:413px;width:5px;height:1px;background:#aaa;"></div>
<div class="a" style="left:138.5px;top:413px;width:2px;height:1px;background:#2580c4;"></div>
<div class="a" style="left:141.0px;top:413px;width:5px;height:1px;background:#aaa;"></div>
<div class="a" style="left:148.0px;top:413px;width:2px;height:1px;background:#28ccd6;"></div>
<div class="a" style="left:150.5px;top:413px;width:5px;height:1px;background:#aaa;"></div>
<div class="a" style="left:90.5px;top:407px;width:1.5px;height:1px;background:#aaa;"></div>
<div class="a" style="left:90.5px;top:398px;width:1.5px;height:1px;background:#aaa;"></div>
<div class="a" style="left:90.5px;top:389px;width:1.5px;height:1px;background:#aaa;"></div>
<div class="a" style="left:90.5px;top:381px;width:1.5px;height:1px;background:#aaa;"></div>
<div class="a" style="left:90.5px;top:372px;width:1.5px;height:1px;background:#aaa;"></div>
<div class="a" style="left:90.5px;top:363px;width:1.5px;height:1px;background:#aaa;"></div>
<div class="a" style="left:90.5px;top:354px;width:1.5px;height:1px;background:#aaa;"></div>
<div class="a" style="left:309px;top:223px;width:1015px;height:572px;background:#fff;border:1px solid #c6c6c6"></div>
<div class="a" style="left:1387px;top:213px;width:15px;height:540px;background:#ececec;"></div>
<div class="a" style="left:1387px;top:213px;width:15px;height:15px;background:#fff;border:1px solid #ababab;"></div>
<svg class="a" style="left:1391px;top:218px;" width="8" height="4" viewBox="0 0 8 4"><path d="M0 4H8L4 0Z" fill="#666"/></svg>
<div class="a" style="left:1387px;top:484px;width:15px;height:255px;background:#fff;border:1px solid #a6a6a6;"></div>
<div class="a" style="left:1387px;top:739px;width:15px;height:15px;background:#fff;border:1px solid #c8c8c8;"></div>
<svg class="a" style="left:1391px;top:745px;" width="8" height="4" viewBox="0 0 8 4"><path d="M0 0H8L4 4Z" fill="#666"/></svg>
<svg class="a" style="left:1390px;top:759px;" width="9" height="9" viewBox="0 0 9 9"><path d="M0 4H9L4.5 0Z M0 9H9L4.5 5Z" fill="#777"/></svg>
<svg class="a" style="left:1390px;top:777px;" width="9" height="9" viewBox="0 0 9 9"><path d="M0 0H9L4.5 4Z M0 5H9L4.5 9Z" fill="#777"/></svg>
<div class="a" style="left:476px;top:281px;width:682px;height:457px;background:transparent;border:1px solid #c3c3c3;"></div>
<div class="a" style="left:479px;top:284px;width:676px;height:451px;background:transparent;border:1px solid #d0d0d0;"></div>
<div class="a" style="left:473.5px;top:278.5px;width:8px;height:8px;background:#fff;border:1px solid #b4b4b4;border-radius:1.5px"></div>
<div class="a" style="left:813px;top:278.5px;width:8px;height:8px;background:#fff;border:1px solid #b4b4b4;border-radius:1.5px"></div>
<div class="a" style="left:1151.5px;top:278.5px;width:8px;height:8px;background:#fff;border:1px solid #b4b4b4;border-radius:1.5px"></div>
<div class="a" style="left:473.5px;top:504.5px;width:8px;height:8px;background:#fff;border:1px solid #b4b4b4;border-radius:1.5px"></div>
<div class="a" style="left:1151.5px;top:504.5px;width:8px;height:8px;background:#fff;border:1px solid #b4b4b4;border-radius:1.5px"></div>
<div class="a" style="left:473.5px;top:731.5px;width:8px;height:8px;background:#fff;border:1px solid #b4b4b4;border-radius:1.5px"></div>
<div class="a" style="left:813px;top:731.5px;width:8px;height:8px;background:#fff;border:1px solid #b4b4b4;border-radius:1.5px"></div>
<div class="a" style="left:1151.5px;top:731.5px;width:8px;height:8px;background:#fff;border:1px solid #b4b4b4;border-radius:1.5px"></div>
<div class="a" style="left:503px;top:680px;width:640px;height:1px;background:#d9d9d9;"></div>
<div class="a" style="left:503px;top:621px;width:640px;height:1px;background:#d9d9d9;"></div>
<div class="a" style="left:503px;top:562px;width:640px;height:1px;background:#d9d9d9;"></div>
<div class="a" style="left:503px;top:503px;width:640px;height:1px;background:#d9d9d9;"></div>
<div class="a" style="left:503px;top:444px;width:640px;height:1px;background:#d9d9d9;"></div>
<div class="a" style="left:503px;top:385px;width:640px;height:1px;background:#d9d9d9;"></div>
<div class="a" style="left:503px;top:326px;width:640px;height:1px;background:#d9d9d9;"></div>
<div class="t" style="left:486.34px;top:674.89px;font-size:11px;color:#595959;">0</div>
<div class="t" style="left:486.34px;top:615.89px;font-size:11px;color:#595959;">1</div>
<div class="t" style="left:486.34px;top:556.89px;font-size:11px;color:#595959;">2</div>
<div class="t" style="left:486.34px;top:497.90px;font-size:11px;color:#595959;">3</div>
<div class="t" style="left:486.34px;top:438.90px;font-size:11px;color:#595959;">4</div>
<div class="t" style="left:486.34px;top:379.90px;font-size:11px;color:#595959;">5</div>
<div class="t" style="left:486.34px;top:320.90px;font-size:11px;color:#595959;">6</div>
<div class="a" style="left:534px;top:427px;width:28px;height:253px;background:#1eabe2;"></div>
<div class="a" style="left:569px;top:539px;width:28px;height:141px;background:#2580c4;"></div>
<div class="a" style="left:605px;top:562px;width:28px;height:118px;background:#28ccd6;"></div>
<div class="t" style="left:553.34px;top:688.89px;font-size:11px;color:#595959;letter-spacing:0.588px;">Category 1</div>
<div class="a" style="left:694px;top:533px;width:28px;height:147px;background:#1eabe2;"></div>
<div class="a" style="left:729px;top:421px;width:28px;height:259px;background:#2580c4;"></div>
<div class="a" style="left:765px;top:562px;width:28px;height:118px;background:#28ccd6;"></div>
<div class="t" style="left:713.34px;top:688.89px;font-size:11px;color:#595959;letter-spacing:0.588px;">Category 2</div>
<div class="a" style="left:854px;top:474px;width:28px;height:206px;background:#1eabe2;"></div>
<div class="a" style="left:889px;top:574px;width:28px;height:106px;background:#2580c4;"></div>
<div class="a" style="left:924px;top:503px;width:28px;height:177px;background:#28ccd6;"></div>
<div class="t" style="left:873.34px;top:688.89px;font-size:11px;color:#595959;letter-spacing:0.588px;">Category 3</div>
<div class="a" style="left:1013px;top:415px;width:28px;height:265px;background:#1eabe2;"></div>
<div class="a" style="left:1049px;top:515px;width:28px;height:165px;background:#2580c4;"></div>
<div class="a" style="left:1084px;top:386px;width:28px;height:294px;background:#28ccd6;"></div>
<div class="t" style="left:1033.34px;top:688.89px;font-size:11px;color:#595959;letter-spacing:0.588px;">Category 4</div>
<div class="t" style="left:775.65px;top:294.74px;font-size:17.5px;color:#595959;letter-spacing:0.240px;">Chart Title</div>
<div class="a" style="left:733px;top:715px;width:6px;height:6px;background:#1eabe2;"></div>
<div class="t" style="left:741.54px;top:712.60px;font-size:11px;color:#595959;letter-spacing:-0.037px;">Series 1</div>
<div class="a" style="left:794px;top:715px;width:6px;height:6px;background:#2580c4;"></div>
<div class="t" style="left:802.64px;top:712.60px;font-size:11px;color:#595959;letter-spacing:-0.037px;">Series 2</div>
<div class="a" style="left:855px;top:715px;width:6px;height:6px;background:#28ccd6;"></div>
<div class="t" style="left:863.54px;top:712.60px;font-size:11px;color:#595959;letter-spacing:-0.037px;">Series 3</div>
<div class="a" style="left:1168px;top:283px;width:28px;height:28px;background:#fff;border:1px solid #a6a6a6;"></div>
<div class="a" style="left:1175px;top:295px;width:13px;height:3px;background:#5a9e7f;"></div>
<div class="a" style="left:1180px;top:290px;width:3px;height:13px;background:#5a9e7f;"></div>
<div class="a" style="left:1168px;top:321px;width:28px;height:28px;background:#fff;border:1px solid #a6a6a6;"></div>
<svg class="a" style="left:1168px;top:321px;" width="28" height="28" viewBox="0 0 28 28"><path d="M22 5 L23 9 L18 14 L16 12 Z" fill="#6e6e6e"/><path d="M16 13 C13 13 11 15 11 17 C10 19 8 21 6 21.5 C10 22 14 21 16 18 C17 16 17 14 16 13Z" fill="#4a7fc1"/><path d="M13 16C12 17 13 19 14 18" fill="none" stroke="#fff" stroke-width="0.8"/></svg>
<div class="a" style="left:1168px;top:359px;width:28px;height:28px;background:#fff;border:1px solid #a6a6a6;"></div>
<svg class="a" style="left:1168px;top:359px;" width="28" height="28" viewBox="0 0 28 28"><path d="M5 6 H23 L16 14 V25 H12 V14 Z" fill="#707070"/><path d="M7 7 L13 14 V24 H14 V14 L8 7Z" fill="#fff" opacity=".85"/></svg>
<svg class="a" style="left:491px;top:469px;" width="16" height="16" viewBox="0 0 16 16"><path d="M5.5 0.5H10.5V5.5H15.5V10.5H10.5V15.5H5.5V10.5H0.5V5.5H5.5Z" fill="#fff" stroke="#000" stroke-width="1.6"/></svg>
<div class="a" style="left:259px;top:221px;width:359px;height:198px;background:#fff;border:1px solid #217346;box-shadow:0 2px 7px rgba(0,0,0,.35)"></div>
<svg class="a" style="left:270px;top:228px;" width="16" height="16" viewBox="0 0 16 16"><rect x="1" y="7" width="4" height="9" fill="#4a7fc1"/><rect x="6" y="2" width="4" height="14" fill="#ebc173"/><rect x="11" y="5" width="4" height="11" fill="#6d6d6d"/></svg>
<svg class="a" style="left:300px;top:229px;" width="14" height="14" viewBox="0 0 14 14"><rect x="0.8" y="0.8" width="12.4" height="12.4" fill="#f4f0f4" stroke="#b0b0b0" stroke-width="1.6"/><rect x="3" y="1" width="8" height="4.5" fill="#b0b0b0"/><rect x="3" y="8" width="8" height="5" fill="#b0b0b0"/><rect x="5.5" y="9.5" width="2.5" height="3.5" fill="#fff"/></svg>
<svg class="a" style="left:328px;top:229px;" width="14" height="14" viewBox="0 0 14 14"><path d="M3 5 H8 A4.5 4.5 0 0 1 8 13.5 H6" fill="none" stroke="#a6a6a6" stroke-width="1.8"/><path d="M0 5 L4 1.5 V8.5Z" fill="#a6a6a6"/></svg>
<svg class="a" style="left:347px;top:235px;" width="5" height="3" viewBox="0 0 5 3"><path d="M0 0H5L2.5 3Z" fill="#aaa"/></svg>
<svg class="a" style="left:368px;top:229px;" width="14" height="14" viewBox="0 0 14 14"><path d="M11 5 H6 A4.5 4.5 0 0 0 6 13.5 H8" fill="none" stroke="#a6a6a6" stroke-width="1.8"/><path d="M14 5 L10 1.5 V8.5Z" fill="#a6a6a6"/></svg>
<svg class="a" style="left:387px;top:235px;" width="5" height="3" viewBox="0 0 5 3"><path d="M0 0H5L2.5 3Z" fill="#aaa"/></svg>
<svg class="a" style="left:408px;top:228px;" width="17" height="16" viewBox="0 0 17 16"><rect x="0.5" y="0.5" width="12" height="11" fill="#fff" stroke="#777"/><path d="M0.5 3.5H12.5M0.5 6.5H12.5M0.5 9H12.5M4.5 3.5V11.5M8.5 3.5V11.5" stroke="#888" stroke-width="0.8"/><rect x="7" y="6" width="10" height="10" fill="#1e7145"/><text x="8.5" y="14.5" font-family="Liberation Sans" font-weight="700" font-size="8.5" fill="#fff">X</text></svg>
<div class="t" style="left:443.82px;top:231.38px;font-size:13px;color:#444;letter-spacing:-0.116px;transform:scaleX(0.9474);transform-origin:0 0;">Chart in Microsoft Pow...</div>
<svg class="a" style="left:597px;top:231px;" width="11" height="11" viewBox="0 0 11 11"><path d="M1 1L10 10M10 1L1 10" stroke="#555" stroke-width="1.8"/></svg>
<div class="a" style="left:260px;top:252px;width:357px;height:1px;background:#d8d8d8;"></div>
<div class="a" style="left:286px;top:253px;width:77px;height:19px;background:#e1e1e1;"></div>
<div class="a" style="left:260px;top:272px;width:25px;height:20px;background:#e1e1e1;"></div>
<svg class="a" style="left:266px;top:257px;" width="16" height="14" viewBox="0 0 16 14"><path d="M15 1V13H2Z" fill="#dcdcdc"/></svg>
<div class="a" style="left:285px;top:253px;width:1px;height:19px;background:#c8c8c8;"></div>
<div class="a" style="left:362px;top:253px;width:1px;height:19px;background:#c8c8c8;"></div>
<div class="a" style="left:432px;top:253px;width:1px;height:19px;background:#c8c8c8;"></div>
<div class="a" style="left:502px;top:253px;width:1px;height:19px;background:#c8c8c8;"></div>
<div class="a" style="left:572px;top:253px;width:1px;height:19px;background:#c8c8c8;"></div>
<div class="a" style="left:285px;top:272px;width:311px;height:1px;background:#bcbcbc;"></div>
<div class="t" style="left:319.48px;top:256.11px;font-size:12.5px;color:#217346;font-weight:700;">A</div>
<div class="t" style="left:392.83px;top:256.11px;font-size:12.5px;color:#444;">B</div>
<div class="t" style="left:462.48px;top:256.11px;font-size:12.5px;color:#444;">C</div>
<div class="t" style="left:532.48px;top:256.11px;font-size:12.5px;color:#444;">D</div>
<div class="t" style="left:268.15px;top:277.91px;font-size:12.5px;color:#217346;font-weight:700;">1</div>
<div class="a" style="left:260px;top:292px;width:25px;height:1px;background:#e6e6e6;"></div>
<div class="t" style="left:268.15px;top:297.91px;font-size:12.5px;color:#444;">2</div>
<div class="a" style="left:260px;top:312px;width:25px;height:1px;background:#e6e6e6;"></div>
<div class="t" style="left:268.15px;top:317.91px;font-size:12.5px;color:#444;">3</div>
<div class="a" style="left:260px;top:332px;width:25px;height:1px;background:#e6e6e6;"></div>
<div class="t" style="left:268.15px;top:337.91px;font-size:12.5px;color:#444;">4</div>
<div class="a" style="left:260px;top:352px;width:25px;height:1px;background:#e6e6e6;"></div>
<div class="t" style="left:268.15px;top:357.91px;font-size:12.5px;color:#444;">5</div>
<div class="a" style="left:260px;top:372px;width:25px;height:1px;background:#e6e6e6;"></div>
<div class="t" style="left:268.15px;top:377.91px;font-size:12.5px;color:#444;">6</div>
<div class="a" style="left:363px;top:273px;width:210px;height:19px;background:#fce8e8;"></div>
<div class="a" style="left:286px;top:293px;width:76px;height:79px;background:#efebf7;"></div>
<div class="a" style="left:363px;top:293px;width:209px;height:79px;background:#eaf0fb;"></div>
<div class="a" style="left:285px;top:292px;width:311px;height:1px;background:#d4d4d4;"></div>
<div class="a" style="left:285px;top:312px;width:311px;height:1px;background:#d4d4d4;"></div>
<div class="a" style="left:285px;top:332px;width:311px;height:1px;background:#d4d4d4;"></div>
<div class="a" style="left:285px;top:352px;width:311px;height:1px;background:#d4d4d4;"></div>
<div class="a" style="left:285px;top:372px;width:311px;height:1px;background:#d4d4d4;"></div>
<div class="a" style="left:285px;top:390px;width:311px;height:1px;background:#bcbcbc;"></div>
<div class="a" style="left:285px;top:272px;width:1px;height:119px;background:#bcbcbc;"></div>
<div class="a" style="left:595px;top:272px;width:1px;height:119px;background:#bcbcbc;"></div>
<div class="a" style="left:362px;top:273px;width:1px;height:117px;background:#d4d4d4;"></div>
<div class="a" style="left:432px;top:273px;width:1px;height:117px;background:#d4d4d4;"></div>
<div class="a" style="left:502px;top:273px;width:1px;height:117px;background:#d4d4d4;"></div>
<div class="a" style="left:572px;top:273px;width:1px;height:117px;background:#d4d4d4;"></div>
<div class="t" style="left:363.75px;top:277.91px;font-size:12.5px;color:#222;letter-spacing:0.484px;">Series 1</div>
<div class="t" style="left:434.35px;top:277.91px;font-size:12.5px;color:#222;letter-spacing:0.484px;">Series 2</div>
<div class="t" style="left:504.45px;top:277.91px;font-size:12.5px;color:#222;letter-spacing:0.484px;">Series 3</div>
<div class="t" style="left:287.85px;top:297.91px;font-size:12.5px;color:#222;letter-spacing:0.455px;">Category 1</div>
<div class="t" style="left:411.71px;top:297.91px;font-size:12.5px;color:#222;">4.3</div>
<div class="t" style="left:481.71px;top:297.91px;font-size:12.5px;color:#222;">2.4</div>
<div class="t" style="left:562.15px;top:297.91px;font-size:12.5px;color:#222;">2</div>
<div class="t" style="left:287.85px;top:317.91px;font-size:12.5px;color:#222;letter-spacing:0.455px;">Category 2</div>
<div class="t" style="left:411.71px;top:317.91px;font-size:12.5px;color:#222;">2.5</div>
<div class="t" style="left:481.71px;top:317.91px;font-size:12.5px;color:#222;">4.4</div>
<div class="t" style="left:562.15px;top:317.91px;font-size:12.5px;color:#222;">2</div>
<div class="t" style="left:287.85px;top:337.91px;font-size:12.5px;color:#222;letter-spacing:0.455px;">Category 3</div>
<div class="t" style="left:411.71px;top:337.91px;font-size:12.5px;color:#222;">3.5</div>
<div class="t" style="left:481.71px;top:337.91px;font-size:12.5px;color:#222;">1.8</div>
<div class="t" style="left:562.15px;top:337.91px;font-size:12.5px;color:#222;">3</div>
<div class="t" style="left:287.85px;top:357.91px;font-size:12.5px;color:#222;letter-spacing:0.455px;">Category 4</div>
<div class="t" style="left:411.71px;top:357.91px;font-size:12.5px;color:#222;">4.5</div>
<div class="t" style="left:481.71px;top:357.91px;font-size:12.5px;color:#222;">2.8</div>
<div class="t" style="left:562.15px;top:357.91px;font-size:12.5px;color:#222;">5</div>
<div class="a" style="left:286px;top:271px;width:77px;height:2px;background:#217346;"></div>
<div class="a" style="left:285px;top:271px;width:2px;height:22px;background:#217346;"></div>
<div class="a" style="left:361px;top:276px;width:2px;height:17px;background:#217346;"></div>
<div class="a" style="left:288px;top:291px;width:73px;height:2px;background:#217346;"></div>
<div class="a" style="left:363px;top:291px;width:210px;height:2px;background:#e05252;"></div>
<div class="a" style="left:571px;top:274px;width:2px;height:19px;background:#e05252;"></div>
<div class="a" style="left:570px;top:272px;width:5px;height:3px;background:#e05252;"></div>
<div class="a" style="left:570px;top:290px;width:5px;height:5px;background:#e05252;"></div>
<div class="a" style="left:361px;top:293px;width:2px;height:80px;background:#8a5cc8;"></div>
<div class="a" style="left:288px;top:371px;width:73px;height:2px;background:#8a5cc8;"></div>
<div class="a" style="left:360px;top:290px;width:5px;height:5px;background:#8a5cc8;"></div>
<div class="a" style="left:285px;top:289px;width:3px;height:5px;background:#8a5cc8;"></div>
<div class="a" style="left:285px;top:370px;width:3px;height:5px;background:#8a5cc8;"></div>
<div class="a" style="left:360px;top:370px;width:5px;height:5px;background:#8a5cc8;"></div>
<div class="a" style="left:571px;top:293px;width:2px;height:78px;background:#5b8de8;"></div>
<div class="a" style="left:366px;top:371px;width:205px;height:2px;background:#5b8de8;"></div>
<div class="a" style="left:570px;top:370px;width:5px;height:5px;background:#5b8de8;"></div>
<div class="a" style="left:599px;top:255px;width:15px;height:136px;background:#e9e9e9;"></div>
<div class="a" style="left:599px;top:255px;width:15px;height:15px;background:#fff;border:1px solid #ababab;"></div>
<svg class="a" style="left:603px;top:260px;" width="7" height="4" viewBox="0 0 7 4"><path d="M0 4H7L3.5 0Z" fill="#666"/></svg>
<div class="a" style="left:599px;top:270px;width:15px;height:26px;background:#fff;border:1px solid #ababab;"></div>
<div class="a" style="left:599px;top:374px;width:15px;height:15px;background:#fff;border:1px solid #ababab;"></div>
<svg class="a" style="left:603px;top:379px;" width="7" height="4" viewBox="0 0 7 4"><path d="M0 0H7L3.5 4Z" fill="#666"/></svg>
<div class="a" style="left:262px;top:397px;width:334px;height:15px;background:#e6e6e6;"></div>
<div class="a" style="left:262px;top:397px;width:15px;height:15px;background:#fff;border:1px solid #ababab;"></div>
<svg class="a" style="left:267px;top:401px;" width="4" height="7" viewBox="0 0 4 7"><path d="M4 0V7L0 3.5Z" fill="#666"/></svg>
<div class="a" style="left:277px;top:397px;width:152px;height:15px;background:#fff;border:1px solid #ababab;"></div>
<div class="a" style="left:581px;top:397px;width:15px;height:15px;background:#fff;border:1px solid #ababab;"></div>
<svg class="a" style="left:587px;top:401px;" width="4" height="7" viewBox="0 0 4 7"><path d="M0 0V7L4 3.5Z" fill="#666"/></svg>
<svg class="a" style="left:1230px;top:540px" width="150" height="273" viewBox="0 0 494 899">
<path d="M104 780 L356 780 L352 899 L112 899Z" fill="#0b2340"/>
<path d="M222 800 L224 899" stroke="#081a30" stroke-width="3"/>
<path d="M60 340 Q80 300 150 268 L178 250 L292 236 L306 234 L372 288 L402 300 L446 380 L466 520 L470 600 L452 700 L442 790 L372 772 L370 800 Q300 822 110 816 L96 782 L40 762 L46 650 L54 480 L58 380Z" fill="#10304f"/>
<path d="M372 300 L402 300 L446 380 L466 520 L470 600 L452 700 L442 790 L372 772 L380 620 L372 420Z" fill="#11324f"/>
<path d="M384 500 L370 700 L364 700 L367 560Z" fill="#c8d0d8"/>
<path d="M60 340 L100 300 L95 450 L70 760 L40 762 L46 650 L54 480Z" fill="#0e2b48"/>
<path d="M186 460 L190 700 Q190 790 110 812" fill="none" stroke="#0a2238" stroke-width="2.5"/>
<path d="M184 200 L180 250 L214 256 L292 236 L286 196Z" fill="#dfa872"/><path d="M168 240 L180 226 L214 246 L284 222 L296 236 L186 452Z" fill="#eeeeee"/>
<path d="M230 232 L294 232 L250 330Z" fill="#dcdcdc"/>
<path d="M150 268 L178 248 L184 340 L186 452 L140 360Z" fill="#0f2e4c" stroke="#0a2238" stroke-width="2"/>
<path d="M294 232 L310 236 L328 300 L186 452 L268 300Z" fill="#0f2e4c" stroke="#0a2238" stroke-width="2"/>
<path d="M202 268 L236 264 L226 292 L208 292Z" fill="#c81c22"/>
<path d="M206 290 L228 290 L218 370 L184 445 L176 420Z" fill="#d9232a"/>
<path d="M158 109 L162 153 L172 189 L186 218 L208 228 L230 228 L252 218 L274 196 L288 164 L296 127 L292 96 L270 80 L226 66 L190 72 L160 92Z" fill="#f1c48d"/>
<path d="M252 74 L270 95 L282 130 L280 170 L262 205 L232 226 L252 218 L274 196 L288 164 L296 127 L292 96Z" fill="#e0aa74"/>
<path d="M230 224 L262 210 L276 192 L270 206 L250 222Z" fill="#b98054"/>
<path d="M286 120 L300 123 L300 152 L288 168Z" fill="#e4ad77"/>
<path d="M151 95 L153 62 L172 35 L194 24 L219 20 L255 25 L281 40 L297 65 L299 95 L288 120 L277 127 L270 95 L252 73 L226 67 L190 73 L157 95 L157 112Z" fill="#6b3f22"/>
<path d="M180 44 L220 32 L258 38 L280 56 L250 50 L215 46 L190 52Z" fill="#8a5a36"/>
<path d="M166 118 Q180 112 194 114 M220 114 Q238 108 252 111" stroke="#5c3a22" stroke-width="3.5" fill="none"/>
<path d="M170 128 Q180 121 191 127 Q180 133 170 128Z" fill="#f4efe8"/><circle cx="181" cy="127.5" r="3.6" fill="#3a2a20"/><path d="M170 128 Q180 121 191 127" fill="none" stroke="#3a2a20" stroke-width="1.6"/>
<path d="M224 127 Q234 120 246 125 Q236 132 224 127Z" fill="#f4efe8"/><circle cx="235" cy="126.5" r="3.6" fill="#3a2a20"/><path d="M224 127 Q234 120 246 125" fill="none" stroke="#3a2a20" stroke-width="1.6"/>
<path d="M205 136 L192 163 L212 166" fill="none" stroke="#c98d5c" stroke-width="2.5"/>
<path d="M182 184 Q206 180 230 186 Q222 198 206 199 Q188 197 182 184Z" fill="#9b4a3c"/>
<path d="M186 186 Q206 183 226 188 L224 191 Q206 188 188 190Z" fill="#f5f5f5"/>
<path d="M36 756 L86 768 L84 778 L34 768Z" fill="#f2f2f2"/>
<path d="M370 768 L426 782 L424 794 L368 782Z" fill="#f2f2f2"/>
<path d="M34 768 L84 778 L90 840 L76 884 L52 892 L30 842 L28 800Z" fill="#ebb57e"/>
<path d="M52 830 L60 870" stroke="#c98a5a" stroke-width="3"/>
<path d="M368 782 L424 794 L432 852 L412 896 L384 884 L366 824Z" fill="#ebb57e"/>
<path d="M395 830 L400 880" stroke="#c98a5a" stroke-width="3"/>
<path d="M372 772 L420 784" stroke="#8a5a30" stroke-width="4"/>
<circle cx="195" cy="512" r="8" fill="#081828"/>
<circle cx="197" cy="580" r="8" fill="#081828"/>
<circle cx="199" cy="645" r="8" fill="#081828"/>
</svg>
<div class="a" style="left:37px;top:813px;width:1366px;height:21px;background:#d24726;"></div>
<div class="a" style="left:37px;top:834px;width:1366px;height:1px;background:#1a1a1a;"></div>
<div class="a" style="left:37px;top:835px;width:1366px;height:1px;background:#eef2f5;"></div>
<div class="a" style="left:37px;top:836px;width:1366px;height:4px;background:#b5b3b0;"></div>
<div class="a" style="left:37px;top:836px;width:494px;height:4px;background:#ff6428;"></div>
<div class="a" style="left:233px;top:834px;width:3px;height:2px;background:#333;"></div>
<div class="a" style="left:554px;top:834px;width:3px;height:2px;background:#333;"></div>
<div class="a" style="left:716px;top:834px;width:3px;height:2px;background:#333;"></div>
<div class="a" style="left:877px;top:834px;width:3px;height:2px;background:#333;"></div>
<div class="a" style="left:1037px;top:834px;width:3px;height:2px;background:#333;"></div>
<div class="t" style="left:43.61px;top:818.77px;font-size:11.5px;color:#fff;letter-spacing:-0.128px;transform:scaleX(0.9126);transform-origin:0 0;">SLIDE 2 OF 2</div>
<svg class="a" style="left:128px;top:818px;" width="15" height="12" viewBox="0 0 15 12"><path d="M0.5 1.5C3 0.5 5 0.5 7 1.5C9 0.5 11 0.5 13.5 1.5V10.5C11 9.5 9 9.5 7 10.5C5 9.5 3 9.5 0.5 10.5Z M7 1.5V10.5" fill="none" stroke="#fff" stroke-width="1"/><path d="M8.5 5L10 7L14 2" fill="none" stroke="#fff" stroke-width="1.3"/></svg>
<div class="t" style="left:158.81px;top:818.77px;font-size:11.5px;color:#fff;letter-spacing:-0.143px;transform:scaleX(0.9045);transform-origin:0 0;">ENGLISH (NEW ZEALAND)</div>
<svg class="a" style="left:886px;top:817px;" width="13" height="13" viewBox="0 0 13 13"><path d="M6.5 0.5L10 4H3Z" fill="#fff"/><path d="M0 6.5H13M0 9H13M0 11.5H13" stroke="#fff" stroke-width="1"/></svg>
<div class="t" style="left:902.61px;top:818.77px;font-size:11.5px;color:#fff;letter-spacing:-0.192px;transform:scaleX(0.9017);transform-origin:0 0;">NOTES</div>
<svg class="a" style="left:957px;top:817px;" width="14" height="13" viewBox="0 0 14 13"><path d="M0 0H14V9H6L3 12.5V9H0Z" fill="#fff"/></svg>
<div class="t" style="left:973.56px;top:818.77px;font-size:11.5px;color:#fff;letter-spacing:-0.188px;transform:scaleX(0.9400);transform-origin:0 0;">COMMENTS</div>
<div class="a" style="left:1054px;top:813px;width:38px;height:21px;background:#b53b1e;"></div>
<svg class="a" style="left:1066px;top:817px;" width="15" height="13" viewBox="0 0 15 13"><rect x="0.8" y="0.8" width="13.4" height="11.4" fill="none" stroke="#fff" stroke-width="1.6"/><rect x="4" y="3" width="6" height="4" fill="#fff"/><path d="M1 9.5H14" stroke="#fff" stroke-width="1.4"/></svg>
<svg class="a" style="left:1104px;top:817px;" width="15" height="13" viewBox="0 0 15 13"><rect x="0" y="0" width="6.5" height="5.5" fill="#fff"/><rect x="8.5" y="0" width="6.5" height="5.5" fill="#fff"/><rect x="0" y="7.5" width="6.5" height="5.5" fill="#fff"/><rect x="8.5" y="7.5" width="6.5" height="5.5" fill="#fff"/></svg>
<svg class="a" style="left:1142px;top:817px;" width="14" height="13" viewBox="0 0 14 13"><path d="M0.5 1.5H6L7 2.5L8 1.5H13.5V11.5H8L7 12.5L6 11.5H0.5Z" fill="none" stroke="#fff"/><path d="M7 2.5V12M2 4H5.5M2 6H5.5M2 8H5.5M8.5 4H12M8.5 6H12M8.5 8H12" stroke="#fff" stroke-width="0.8"/></svg>
<svg class="a" style="left:1179px;top:817px;" width="15" height="14" viewBox="0 0 15 14"><path d="M0 0.5H15" stroke="#fff" stroke-width="1.2"/><rect x="1.5" y="1.5" width="12" height="6" fill="none" stroke="#fff"/><path d="M7.5 8V11M4 13.5L7.5 10.5L11 13.5" fill="none" stroke="#fff"/></svg>
<div class="a" style="left:1211px;top:823px;width:6px;height:2px;background:#fff;"></div>
<div class="a" style="left:1221px;top:823px;width:100px;height:1px;background:#f3c0b0;"></div>
<div class="a" style="left:1259px;top:817px;width:4px;height:12px;background:#fff;"></div>
<div class="a" style="left:1271px;top:820px;width:1px;height:6px;background:#f3c0b0;"></div>
<div class="a" style="left:1325px;top:823px;width:8px;height:2px;background:#fff;"></div>
<div class="a" style="left:1328px;top:820px;width:2px;height:8px;background:#fff;"></div>
<div class="t" style="left:1346.31px;top:818.77px;font-size:11.5px;color:#fff;letter-spacing:0.059px;">80%</div>
<svg class="a" style="left:1382px;top:816px;" width="15" height="15" viewBox="0 0 15 15"><rect x="0.5" y="0.5" width="14" height="14" fill="none" stroke="#fff"/><path d="M7.5 3V12M3 7.5H12M5.5 4.5L7.5 2.5L9.5 4.5M5.5 10.5L7.5 12.5L9.5 10.5M4.5 5.5L2.5 7.5L4.5 9.5M10.5 5.5L12.5 7.5L10.5 9.5" fill="none" stroke="#fff"/></svg>
<div class="a" style="left:37px;top:840px;width:1366px;height:33px;background:#e9e9e9;"></div>
<svg class="a" style="left:50px;top:848px;" width="15" height="18" viewBox="0 0 15 18"><path d="M0 0L15 9L0 18Z" fill="#8e8e8e"/></svg>
<svg class="a" style="left:82px;top:848px;" width="20" height="20" viewBox="0 0 20 20"><path d="M4 4A8 8 0 1 1 2.5 13" fill="none" stroke="#8e8e8e" stroke-width="2"/><path d="M0 2L6 2L3 7Z" fill="#8e8e8e"/><text x="5" y="14" font-family="Liberation Sans" font-weight="700" font-size="8" fill="#8e8e8e">10</text></svg>
<svg class="a" style="left:116px;top:848px;" width="15" height="18" viewBox="0 0 15 18"><path d="M0 0H10L15 5V18H0Z" fill="#8e8e8e"/><path d="M3 8H12M3 11H12M3 14H12" stroke="#e9e9e9" stroke-width="1"/><path d="M10 0V5H15" fill="#bbb"/></svg>
<svg class="a" style="left:145px;top:849px;" width="21" height="17" viewBox="0 0 21 17"><path d="M0 5H4L10 0V17L4 12H0Z" fill="#8e8e8e"/><path d="M13 5A5 5 0 0 1 13 12M16 2.5A9 9 0 0 1 16 14.5" fill="none" stroke="#8e8e8e" stroke-width="2"/></svg>
<div class="a" style="left:182px;top:855px;width:88px;height:4px;background:#7ab3d6;border-top:1px solid #5a9bc4"></div>
<div class="a" style="left:269px;top:852px;width:12px;height:12px;background:#d0d0d0;border:1px solid #888;border-radius:1px"></div>
<svg class="a" style="left:665px;top:840px" width="35" height="32" viewBox="0 0 990 905"><g fill="none" stroke="#aaa" stroke-width="30"><path d="M290 125H640L780 300V380H630V290M290 125L150 300V380H300V290M250 215H360V720M450 215V630H540M545 215H650M550 215V520H670M150 440H360M150 440V540L230 640H300M560 440H790V540L700 640H630V720M310 720H670M260 520H350"/></g><path d="M370 795H615" stroke="#aaa" stroke-width="45"/></svg>
<div class="t" style="left:698.68px;top:844.29px;font-size:22px;color:#c3c3c3;letter-spacing:-0.258px;transform:scaleX(0.9371);transform-origin:0 0;">LaSkola</div>
<svg class="a" style="left:1280px;top:847px;" width="20" height="20" viewBox="0 0 20 20"><circle cx="10" cy="10" r="8.6" fill="none" stroke="#b3b3b3" stroke-width="2"/><path d="M9.8 3.5V10L13.5 13.5" fill="none" stroke="#b3b3b3" stroke-width="1.8"/></svg>
<div class="t" style="left:1307.23px;top:845.83px;font-size:19.5px;color:#adadad;font-weight:700;font-family:'Liberation Serif';letter-spacing:1.363px;">07:00</div>
<svg class="a" style="left:1375px;top:848px;" width="19" height="19" viewBox="0 0 19 19"><path d="M2 7V2H7M12 2H17V7M17 12V17H12M7 17H2V12" fill="none" stroke="#939393" stroke-width="1.9"/></svg>
</body></html>
